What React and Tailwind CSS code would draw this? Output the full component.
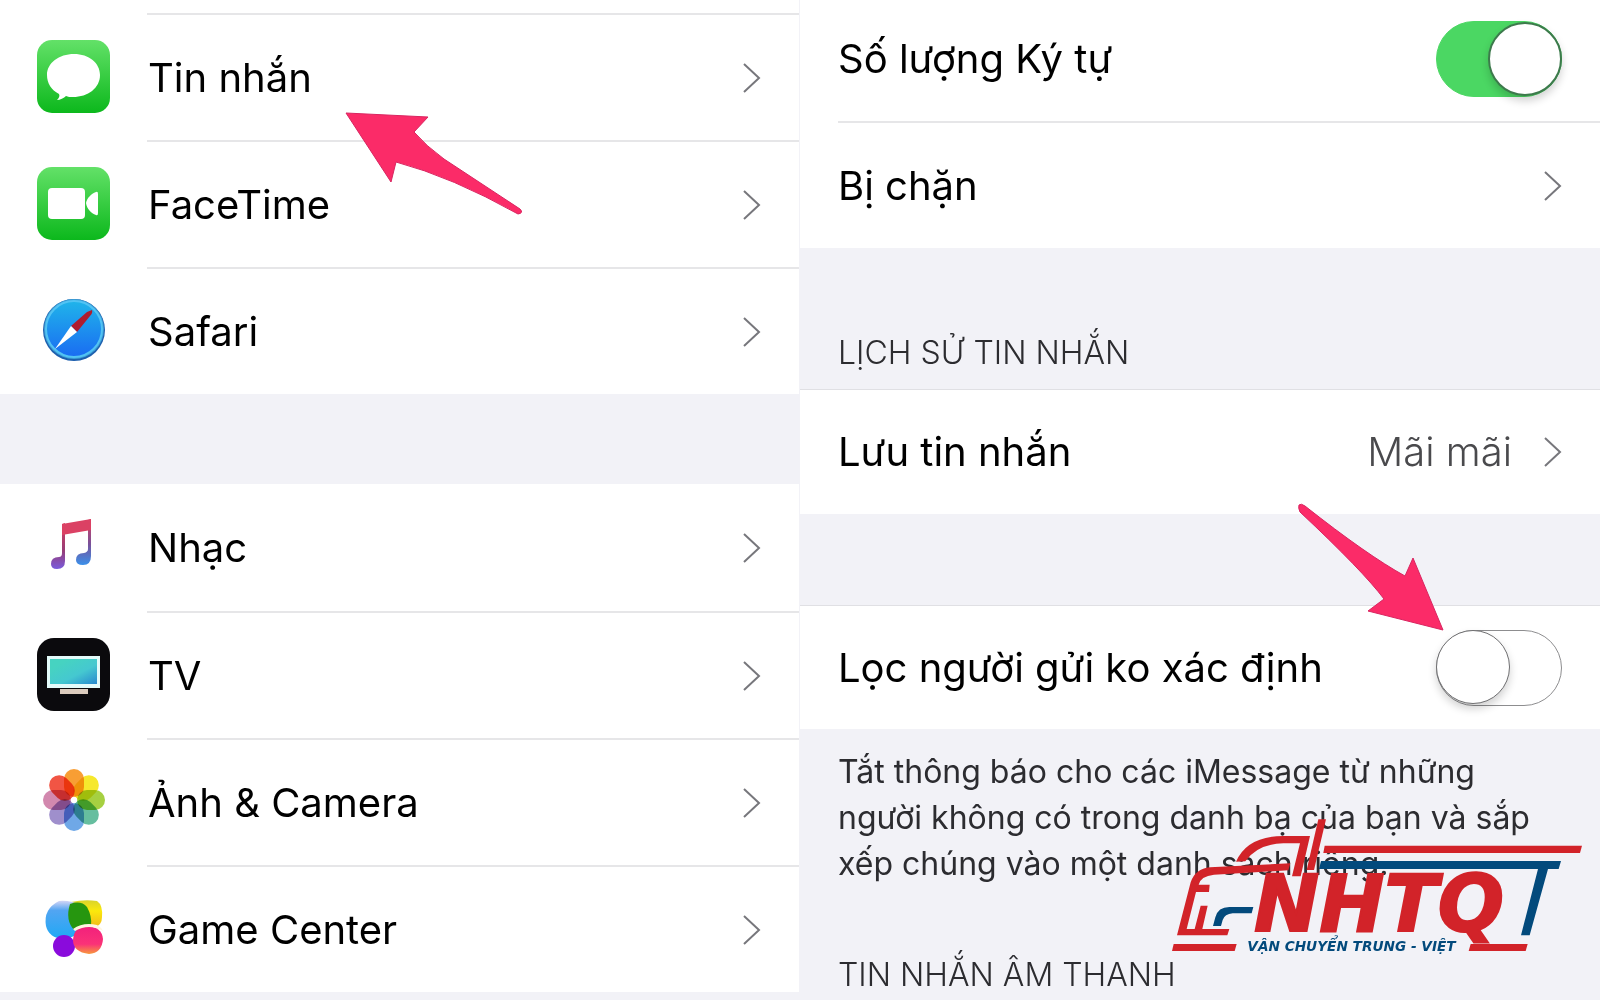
import React, { useState } from 'react';

function Chevron() {
    return (
        <svg className="w-5 h-9 shrink-0" viewBox="0 0 20 36" fill="none" stroke="#77777c" strokeWidth="2">
            <path d="M3 4 L18 18 L3 32" />
        </svg>
    );
}

function MessagesIcon() {
    return (
        <svg className="w-[73px] h-[73px]" viewBox="0 0 73 73">
            <defs>
                <linearGradient id="greenTile" x1="0" y1="0" x2="0" y2="1">
                    <stop offset="0" stopColor="#63e168" />
                    <stop offset="1" stopColor="#0cb81c" />
                </linearGradient>
            </defs>
            <rect width="73" height="73" rx="15" fill="url(#greenTile)" />
            <path
                d="M37 14 C52 14 63 23 63 35 C63 48 51 57 36 57 C33 57 31 57 29 56 C27 58 23 60 20 60 C22 58 23 56 22 54 C14 50 10 43 10 35 C10 23 22 14 37 14 Z"
                fill="#fff"
            />
        </svg>
    );
}

function FaceTimeIcon() {
    return (
        <svg className="w-[73px] h-[73px]" viewBox="0 0 73 73">
            <rect width="73" height="73" rx="15" fill="url(#greenTile)" />
            <rect x="11" y="21" width="37" height="31" rx="4" fill="#fff" />
            <path d="M49 36 C50 31 54 27 59 25 Q61 24 61 27 V46 Q61 49 59 48 C54 46 50 42 49 36 Z" fill="#fff" />
        </svg>
    );
}

function SafariIcon() {
    return (
        <svg className="w-[73px] h-[73px]" viewBox="0 0 73 73">
            <defs>
                <linearGradient id="safariFace" x1="0" y1="0" x2="0" y2="1">
                    <stop offset="0" stopColor="#20b4ea" />
                    <stop offset="1" stopColor="#1a6cf2" />
                </linearGradient>
            </defs>
            <circle cx="37" cy="36" r="31" fill="#1d5fae" />
            <circle cx="37" cy="35" r="30" fill="#3c9fd6" />
            <circle cx="37" cy="35" r="28" fill="url(#safariFace)" stroke="#52c3f4" strokeWidth="2" />
            <path d="M55 16 Q56 19 53 22 L40 38 L34 32 L50 18 Z" fill="#b01c2e" />
            <path d="M34 32 L40 38 L18 55 Z" fill="#fff" />
        </svg>
    );
}

function MusicIcon() {
    return (
        <svg className="w-[73px] h-[73px]" viewBox="0 0 73 73">
            <defs>
                <linearGradient id="noteLeft" x1="0" y1="0" x2="0" y2="1">
                    <stop offset="0" stopColor="#d8405f" />
                    <stop offset="0.6" stopColor="#963d77" />
                    <stop offset="1" stopColor="#7a5bdc" />
                </linearGradient>
                <linearGradient id="noteRight" x1="0" y1="0" x2="0" y2="1">
                    <stop offset="0" stopColor="#d8405f" />
                    <stop offset="0.55" stopColor="#78519a" />
                    <stop offset="1" stopColor="#3a90ea" />
                </linearGradient>
            </defs>
            <path d="M25 13 L28 12 V50 Q28 58 20 58 Q14 58 14 53 Q14 46 22 46 Q25 46 25 42 Z" fill="url(#noteLeft)" />
            <path d="M51 9 L54 8 V45 Q54 54 46 54 Q39 54 39 49 Q39 42 47 42 Q51 41 51 38 Z" fill="url(#noteRight)" />
            <path d="M25 13 L54 8 V19 L25 24 Z" fill="#db4164" />
        </svg>
    );
}

function TvIcon() {
    return (
        <svg className="w-[73px] h-[73px]" viewBox="0 0 73 73">
            <defs>
                <linearGradient id="tvScreen" x1="0" y1="0" x2="1" y2="1">
                    <stop offset="0.2" stopColor="#46d3c1" />
                    <stop offset="0.6" stopColor="#45c8d0" />
                    <stop offset="1" stopColor="#2889cf" />
                </linearGradient>
            </defs>
            <rect width="73" height="73" rx="17" fill="#0b0a0d" />
            <rect x="10" y="18" width="53" height="32" fill="#e4fbfa" />
            <rect x="13" y="21" width="47" height="25" fill="url(#tvScreen)" />
            <rect x="23" y="51" width="28" height="5" fill="#dccbbd" />
        </svg>
    );
}

const petals = [
    { color: '#f7931e', angle: 0 },
    { color: '#f5e616', angle: 45 },
    { color: '#9ccb2c', angle: 90 },
    { color: '#55b795', angle: 135 },
    { color: '#5f9fe4', angle: 180 },
    { color: '#9583c6', angle: 225 },
    { color: '#cd7ba5', angle: 270 },
    { color: '#ef4230', angle: 315 }
];

function PhotosIcon() {
    return (
        <svg className="w-[73px] h-[73px]" viewBox="0 0 73 73">
            {petals.map((p) => (
                <rect
                    key={p.angle}
                    className="mix-blend-multiply"
                    x="27"
                    y="4"
                    width="20"
                    height="28"
                    rx="10"
                    fill={p.color}
                    fillOpacity="0.9"
                    transform={`rotate(${p.angle} 37 35)`}
                />
            ))}
            <circle cx="37" cy="35" r="3" fill="#fff" />
        </svg>
    );
}

function GameCenterIcon() {
    return (
        <svg className="w-[73px] h-[73px]" viewBox="0 0 73 73">
            <defs>
                <linearGradient id="gcBlue" x1="0" y1="0" x2="0" y2="1">
                    <stop offset="0" stopColor="#d3d5f6" />
                    <stop offset="0.25" stopColor="#52a5f2" />
                    <stop offset="1" stopColor="#1fa8f5" />
                </linearGradient>
                <linearGradient id="gcYellow" x1="0" y1="0" x2="0" y2="1">
                    <stop offset="0" stopColor="#d9d32c" />
                    <stop offset="0.4" stopColor="#fbe90c" />
                    <stop offset="1" stopColor="#f2b91a" />
                </linearGradient>
                <linearGradient id="gcPink" x1="0" y1="0" x2="0" y2="1">
                    <stop offset="0" stopColor="#f2207c" />
                    <stop offset="0.65" stopColor="#fa3278" />
                    <stop offset="1" stopColor="#f79a3c" />
                </linearGradient>
            </defs>
            <path d="M34 10 Q48 7 60 9 Q66 13 65 25 Q65 33 58 35 L42 34 Z" fill="url(#gcYellow)" />
            <path d="M22 9 Q34 8 45 14 Q52 24 45 36 Q38 47 26 47 Q12 46 9 34 Q6 17 22 9 Z" fill="url(#gcBlue)" />
            <path d="M33 12 Q44 8 50 15 Q55 24 54 33 Q42 33 37 38 Q28 28 33 12 Z" fill="#26960f" />
            <ellipse cx="27" cy="54" rx="11" ry="11" fill="#8a0bdc" />
            <path d="M50 34 Q65 35 66 47 Q65 61 52 62 Q36 60 36 48 Q37 34 50 34 Z" fill="url(#gcPink)" />
            <path d="M36 37 Q46 30 60 33 Q64 35 66 39 Q52 31 38 39 Z" fill="#fff6e0" />
        </svg>
    );
}

const appGroups = [
    [
        { name: 'Tin nhắn', icon: <MessagesIcon />, pointer: true },
        { name: 'FaceTime', icon: <FaceTimeIcon /> },
        { name: 'Safari', icon: <SafariIcon /> }
    ],
    [
        { name: 'Nhạc', icon: <MusicIcon /> },
        { name: 'TV', icon: <TvIcon /> },
        { name: 'Ảnh & Camera', icon: <PhotosIcon /> },
        { name: 'Game Center', icon: <GameCenterIcon /> }
    ]
];

function AppRow({ app, divider }) {
    return (
        <li className="relative">
            <button type="button" className="flex w-full h-[127px] items-center text-left">
                <span className="w-[147px] shrink-0 pl-[37px]">{app.icon}</span>
                <span className={`flex flex-1 h-full items-center justify-between pr-[38px] ${divider ? 'border-t-2 border-[#e6e6e8]' : ''}`}>
                    <span className="pl-px">{app.name}</span>
                    <Chevron />
                </span>
            </button>
            {app.pointer && (
                <svg className="absolute z-10 left-[344px] top-[98px] w-[182px] h-[108px]" viewBox="0 0 182 108">
                    <path
                        d="M2 2 L84 6 L70 21 Q82 35 100 48 L176 98 Q180 102 174 103 Q108 66 52 51 L47 71 Z"
                        fill="#fb2b68"
                        stroke="#d92560"
                        strokeWidth="1"
                    />
                </svg>
            )}
        </li>
    );
}

function Toggle({ id, checked, onChange }) {
    return (
        <input
            id={id}
            type="checkbox"
            role="switch"
            checked={checked}
            onChange={onChange}
            className="relative h-[76px] w-[126px] shrink-0 appearance-none rounded-full border border-[#8d8d8f] bg-white before:absolute before:-left-px before:-top-px before:size-[74px] before:rounded-full before:border before:border-[#6f6f71] before:bg-white before:shadow-[0_5px_8px_rgba(0,0,0,0.18)] before:content-[''] checked:border-[#4bd763] checked:bg-[#4bd763] checked:before:left-[51px] checked:before:top-0 checked:before:border-2 checked:before:border-[#3d7a4c]"
        />
    );
}

function BrandLogo() {
    return (
        <svg className="absolute right-[15px] top-[817px] w-[415px] h-[137px]" viewBox="30 51 1245 411">
            <g fill="#d22329">
                <path d="M475 58 H498 L462 210 H440 Z" />
                <path d="M228 185 Q262 108 370 108 H450 L422 229 H396 L420 130 H370 Q292 132 256 184 Z" />
                <path d="M494 137 H1266 L1260 159 H490 Z" />
                <path d="M51 406 L92 247 Q106 206 150 202 L391 190 L385 211 L162 224 Q122 228 116 254 H149 L147 276 H108 L80 387 H104 L122 317 H143 L127 387 H208 L202 406 Z" />
                <path d="M41 432 H230 L224 453 H36 Z" />
                <path d="M932 432 H1103 L1097 453 H926 Z" />
            </g>
            <g fill="#034a7c">
                <path d="M483 183 H1203 L1196 207 H1164 L1109 406 H1083 L1134 207 H477 Z" />
                <path d="M159 378 L166 352 Q174 321 208 321 H280 L275 340 H218 Q194 342 188 360 L183 378 Z" />
            </g>
            <text x="282" y="394" className="font-['DejaVu_Sans',sans-serif] text-[234px] font-bold italic" fill="#d22329" stroke="#d22329" strokeWidth="6">
                NHTQ
            </text>
            <text x="262" y="453" className="font-['DejaVu_Sans',sans-serif] text-[41px] font-bold italic" fill="#034a7c">
                VẬN CHUYỂN TRUNG - VIỆT
            </text>
        </svg>
    );
}

export default function App() {
    const [showCount, setShowCount] = useState(true);
    const [filterUnknown, setFilterUnknown] = useState(false);

    return (
        <div className="relative grid min-h-screen grid-cols-2 overflow-hidden bg-[#f2f2f7] font-['Inter',sans-serif] text-[40px] leading-none text-black">
            <nav className="border-r border-[#f2f2f7]">
                <div className="h-[13px] bg-white" />
                {appGroups.map((apps, g) => (
                    <ul key={g} className={`bg-white ${g > 0 ? 'mt-[90px]' : ''}`}>
                        {apps.map((app, i) => (
                            <AppRow key={app.name} app={app} divider={g === 0 || i > 0} />
                        ))}
                    </ul>
                ))}
            </nav>

            <main>
                <section className="bg-white">
                    <div className="flex h-[121px] items-center justify-between px-[38px] pb-1">
                        <label htmlFor="char-count">Số lượng Ký tự</label>
                        <Toggle id="char-count" checked={showCount} onChange={() => setShowCount(!showCount)} />
                    </div>
                    <div className="pl-[38px]">
                        <button type="button" className="flex h-[127px] w-full items-center justify-between border-t-2 border-[#e6e6e8] pr-[38px] text-left">
                            <span>Bị chặn</span>
                            <Chevron />
                        </button>
                    </div>
                </section>

                <section>
                    <h2 className="flex h-[141px] items-end pb-[18px] pl-[38px] text-[32px] leading-9 font-light text-[#2c2c30]">LỊCH SỬ TIN NHẮN</h2>
                    <button type="button" className="flex h-[125px] w-full items-center justify-between border-t border-[#e0e0e4] bg-white px-[38px] text-left">
                        <span>Lưu tin nhắn</span>
                        <span className="flex items-center gap-[30px]">
                            <span className="font-light text-[#4a4a4d]">Mãi mãi</span>
                            <Chevron />
                        </span>
                    </button>
                </section>

                <section className="relative mt-[91px]">
                    <div className="flex h-[124px] items-center justify-between border-t border-[#e0e0e4] bg-white px-[38px]">
                        <label htmlFor="filter-unknown">Lọc người gửi ko xác định</label>
                        <Toggle id="filter-unknown" checked={filterUnknown} onChange={() => setFilterUnknown(!filterUnknown)} />
                    </div>
                    <svg className="absolute z-10 right-[153px] -top-[102px] w-[150px] h-[129px]" viewBox="0 0 150 129">
                        <path
                            d="M2 2 Q4 0 8 3 Q70 52 108 73 L116 55 L146 127 L71 108 L87 96 Q66 68 3 9 Q1 5 2 2 Z"
                            fill="#fb2b68"
                            stroke="#d92560"
                            strokeWidth="1"
                        />
                    </svg>
                    <p className="pl-[38px] pt-5 text-[32px] leading-[46px] text-[#2c2c30]">
                        Tắt thông báo cho các iMessage từ những
                        <br />
                        người không có trong danh bạ của bạn và sắp
                        <br />
                        xếp chúng vào một danh sách riêng.
                    </p>
                </section>

                <h2 className="pt-[70px] pl-[38px] text-[32px] leading-9 font-light text-[#2c2c30]">TIN NHẮN ÂM THANH</h2>
            </main>

            <BrandLogo />
        </div>
    );
}
